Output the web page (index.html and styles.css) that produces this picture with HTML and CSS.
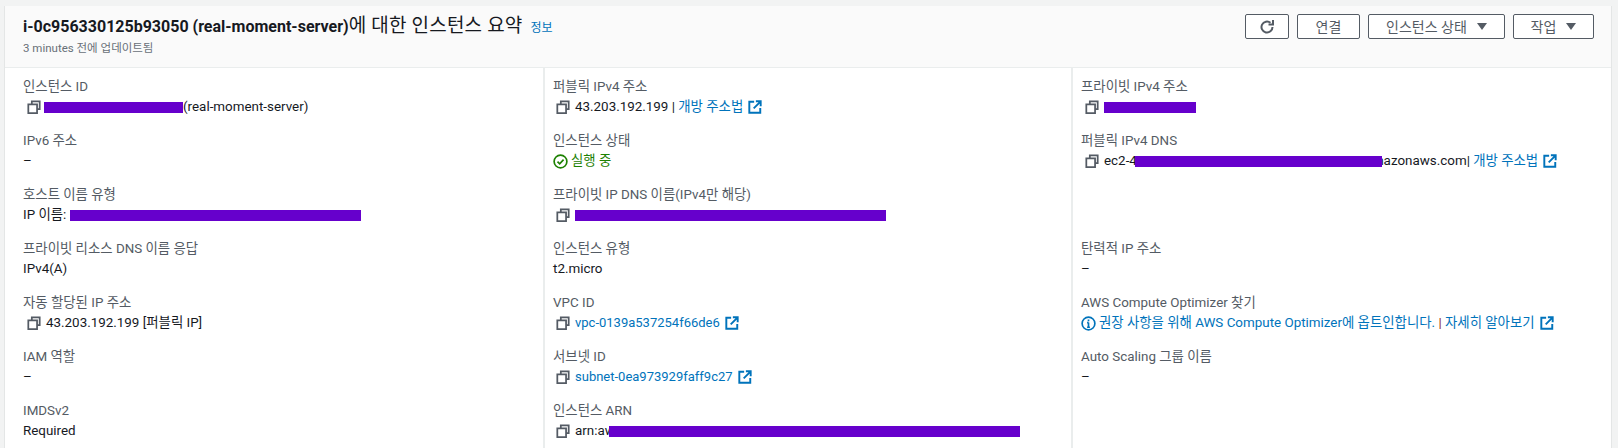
FILE: index.html
```html
<!DOCTYPE html>
<html lang="ko">
<head>
<meta charset="utf-8">
<title>인스턴스 요약</title>
<link rel="stylesheet" href="styles.css">
</head>
<body>
<svg class="defs" width="0" height="0" aria-hidden="true">
  <symbol id="copy" viewBox="0 0 16 16"><path d="M5.500 4.500V1.500h9v9h-3" fill="none" stroke="currentColor" stroke-width="2"/><rect x="1.500" y="5" width="10" height="10" fill="none" stroke="currentColor" stroke-width="2"/></symbol>
  <symbol id="ext" viewBox="0 0 16 16"><path d="M7 2H1.500v12.500h12.500V9" fill="none" stroke="currentColor" stroke-width="2.200"/><path d="M9 1.500h5.500V7M14.500 1.500L6.500 9.500" fill="none" stroke="currentColor" stroke-width="2.200"/></symbol>
</svg>
<main class="card">
  <header class="head">
    <div class="head-text">
      <h1 class="title"><b>i-0c956330125b93050 (real-moment-server)</b><span class="title-ko">에 대한 인스턴스 요약</span><a class="info">정보</a></h1>
      <p class="updated">3 minutes 전에 업데이트됨</p>
    </div>
    <div class="actions">
      <button class="btn btn-icon"><svg class="refresh" viewBox="0 0 16 16"><path d="M13.500 8A5.500 5.500 0 1 1 11.500 3.800" fill="none" stroke="currentColor" stroke-width="2"/><path d="M9.500 5.500h4.500V1" fill="none" stroke="currentColor" stroke-width="2"/></svg></button>
      <button class="btn btn-connect">연결</button>
      <button class="btn btn-state">인스턴스 상태<i class="caret"></i></button>
      <button class="btn btn-act">작업<i class="caret"></i></button>
    </div>
  </header>
  <section class="grid">
    <div class="col">
      <div class="item"><div class="label">인스턴스 ID</div><div class="value"><svg class="copy"><use href="#copy"/></svg><span class="mask mask-id"></span>(real-moment-server)</div></div>
      <div class="item"><div class="label">IPv6 주소</div><div class="value">–</div></div>
      <div class="item"><div class="label">호스트 이름 유형</div><div class="value">IP 이름: <span class="mask mask-host"></span></div></div>
      <div class="item"><div class="label">프라이빗 리소스 DNS 이름 응답</div><div class="value">IPv4(A)</div></div>
      <div class="item"><div class="label">자동 할당된 IP 주소</div><div class="value"><svg class="copy"><use href="#copy"/></svg>43.203.192.199 [퍼블릭 IP]</div></div>
      <div class="item"><div class="label">IAM 역할</div><div class="value">–</div></div>
      <div class="item"><div class="label">IMDSv2</div><div class="value">Required</div></div>
    </div>
    <div class="col">
      <div class="item"><div class="label">퍼블릭 IPv4 주소</div><div class="value"><svg class="copy"><use href="#copy"/></svg>43.203.192.199 | <a class="link">개방 주소법<svg class="ext"><use href="#ext"/></svg></a></div></div>
      <div class="item"><div class="label">인스턴스 상태</div><div class="value status"><svg class="ok" viewBox="0 0 16 16"><circle cx="8" cy="8" r="6.800" fill="none" stroke="currentColor" stroke-width="1.800"/><path d="M4.800 8.200l2.300 2.300 4.200-4.500" fill="none" stroke="currentColor" stroke-width="1.800"/></svg>실행 중</div></div>
      <div class="item"><div class="label">프라이빗 IP DNS 이름(IPv4만 해당)</div><div class="value"><svg class="copy"><use href="#copy"/></svg><span class="mask mask-dns"></span></div></div>
      <div class="item"><div class="label">인스턴스 유형</div><div class="value">t2.micro</div></div>
      <div class="item"><div class="label">VPC ID</div><div class="value"><svg class="copy"><use href="#copy"/></svg><a class="link link-id">vpc-0139a537254f66de6<svg class="ext"><use href="#ext"/></svg></a></div></div>
      <div class="item"><div class="label">서브넷 ID</div><div class="value"><svg class="copy"><use href="#copy"/></svg><a class="link link-id">subnet-0ea973929faff9c27<svg class="ext"><use href="#ext"/></svg></a></div></div>
      <div class="item"><div class="label">인스턴스 ARN</div><div class="value"><svg class="copy"><use href="#copy"/></svg>arn:aw<span class="mask mask-arn"></span></div></div>
    </div>
    <div class="col">
      <div class="item"><div class="label">프라이빗 IPv4 주소</div><div class="value"><svg class="copy"><use href="#copy"/></svg><span class="mask mask-priv"></span></div></div>
      <div class="item"><div class="label">퍼블릭 IPv4 DNS</div><div class="value"><svg class="copy"><use href="#copy"/></svg>ec2-4<span class="mask mask-pub"></span>mazonaws.com| <a class="link">개방 주소법<svg class="ext"><use href="#ext"/></svg></a></div></div>
      <div class="item"></div>
      <div class="item"><div class="label">탄력적 IP 주소</div><div class="value">–</div></div>
      <div class="item"><div class="label">AWS Compute Optimizer 찾기</div><div class="value"><svg class="info-ic" viewBox="0 0 16 16"><circle cx="8" cy="8" r="6.800" fill="none" stroke="currentColor" stroke-width="1.800"/><path d="M8 7v5M6.500 12h3M6.500 7H8M8 3.800v1.700" fill="none" stroke="currentColor" stroke-width="1.800"/></svg><a class="link">권장 사항을 위해 AWS Compute Optimizer에 옵트인합니다.</a><span class="sep"> | </span><a class="link">자세히 알아보기<svg class="ext"><use href="#ext"/></svg></a></div></div>
      <div class="item"><div class="label">Auto Scaling 그룹 이름</div><div class="value">–</div></div>
    </div>
  </section>
</main>
</body>
</html>
```
FILE: styles.css
```css
* { box-sizing: border-box; }
html, body { margin: 0; height: 448px; overflow: hidden; }
body {
  background: #f2f3f3;
  padding: 6px 6px 0 4px;
  font-family: Roboto, "Noto Sans CJK KR", sans-serif;
  font-size: 13.400px;
  line-height: 20px;
  color: #16191f;
}
.defs { position: absolute; }
.card {
  height: 442px;
  background: #fff;
  border-left: 1px solid #e4e6e6;
  border-right: 1px solid #e4e6e6;
}
.head {
  display: flex;
  justify-content: space-between;
  height: 62px;
  padding: 7px 17px 0 18px;
  background: #fafafa;
  border-bottom: 1px solid #eaeded;
}
.title { margin: 0; font-size: 16px; line-height: 26px; font-weight: 400; }
.title b { font-weight: 700; }
.title-ko { font-size: 19px; letter-spacing: 0.200px; }
.info { margin-left: 8px; font-size: 12px; font-weight: 400; letter-spacing: 0; color: #0073bb; }
.updated { margin: 0; font-size: 11.500px; line-height: 14px; color: #687078; }
.actions { display: flex; gap: 8px; align-items: flex-start; padding-top: 1px; }
.btn {
  display: flex;
  align-items: center;
  justify-content: center;
  height: 25px;
  padding: 0;
  background: #fff;
  border: 1px solid #545b64;
  border-radius: 2px;
  color: #545b64;
  font: inherit;
  font-size: 14px;
}
.btn-icon { width: 44px; }
.btn-connect { width: 63px; }
.btn-state { width: 137px; }
.btn-act { width: 81px; }
.refresh { width: 16px; height: 16px; }
.caret {
  margin-left: 10px;
  border-left: 5px solid transparent;
  border-right: 5px solid transparent;
  border-top: 7px solid #545b64;
}
.grid { display: grid; grid-template-columns: 538px 528px 1fr; }
.col { display: grid; grid-auto-rows: 54px; padding: 6px 0 0 18px; height: 380px; }
.col + .col { border-left: 2px solid #eaeded; padding-left: 8px; }
.item { padding-top: 4px; }
.label { color: #545b64; height: 18px; line-height: 18px; }
.value { display: flex; align-items: center; white-space: pre; height: 22px; }
.copy { width: 14px; height: 14px; margin: 0 5px 0 4px; color: #545b64; flex: none; }
.col:nth-child(2) .copy { margin-left: 3px; }
.link { color: #0073bb; display: inline-flex; align-items: center; }
.link-id { font-size: 13px; }
.ext { width: 14px; height: 14px; margin-left: 5px; color: #0073bb; }
.status { color: #1d8102; }
.ok { width: 15px; height: 15px; margin-right: 3px; }
.info-ic { width: 15px; height: 15px; margin-right: 3px; color: #0073bb; }
.sep { color: #8b2a1b; }
.mask { position: relative; display: inline-block; height: 11px; background: #6600cc; }
.mask-id { width: 139px; margin-left: -2px; }
.mask-host { width: 291px; }
.mask-dns { width: 311px; }
.mask-arn { width: 411px; margin-left: -6px; }
.mask-priv { width: 92px; }
.mask-pub { width: 247px; margin: 0 -10px 0 -2px; }
```
